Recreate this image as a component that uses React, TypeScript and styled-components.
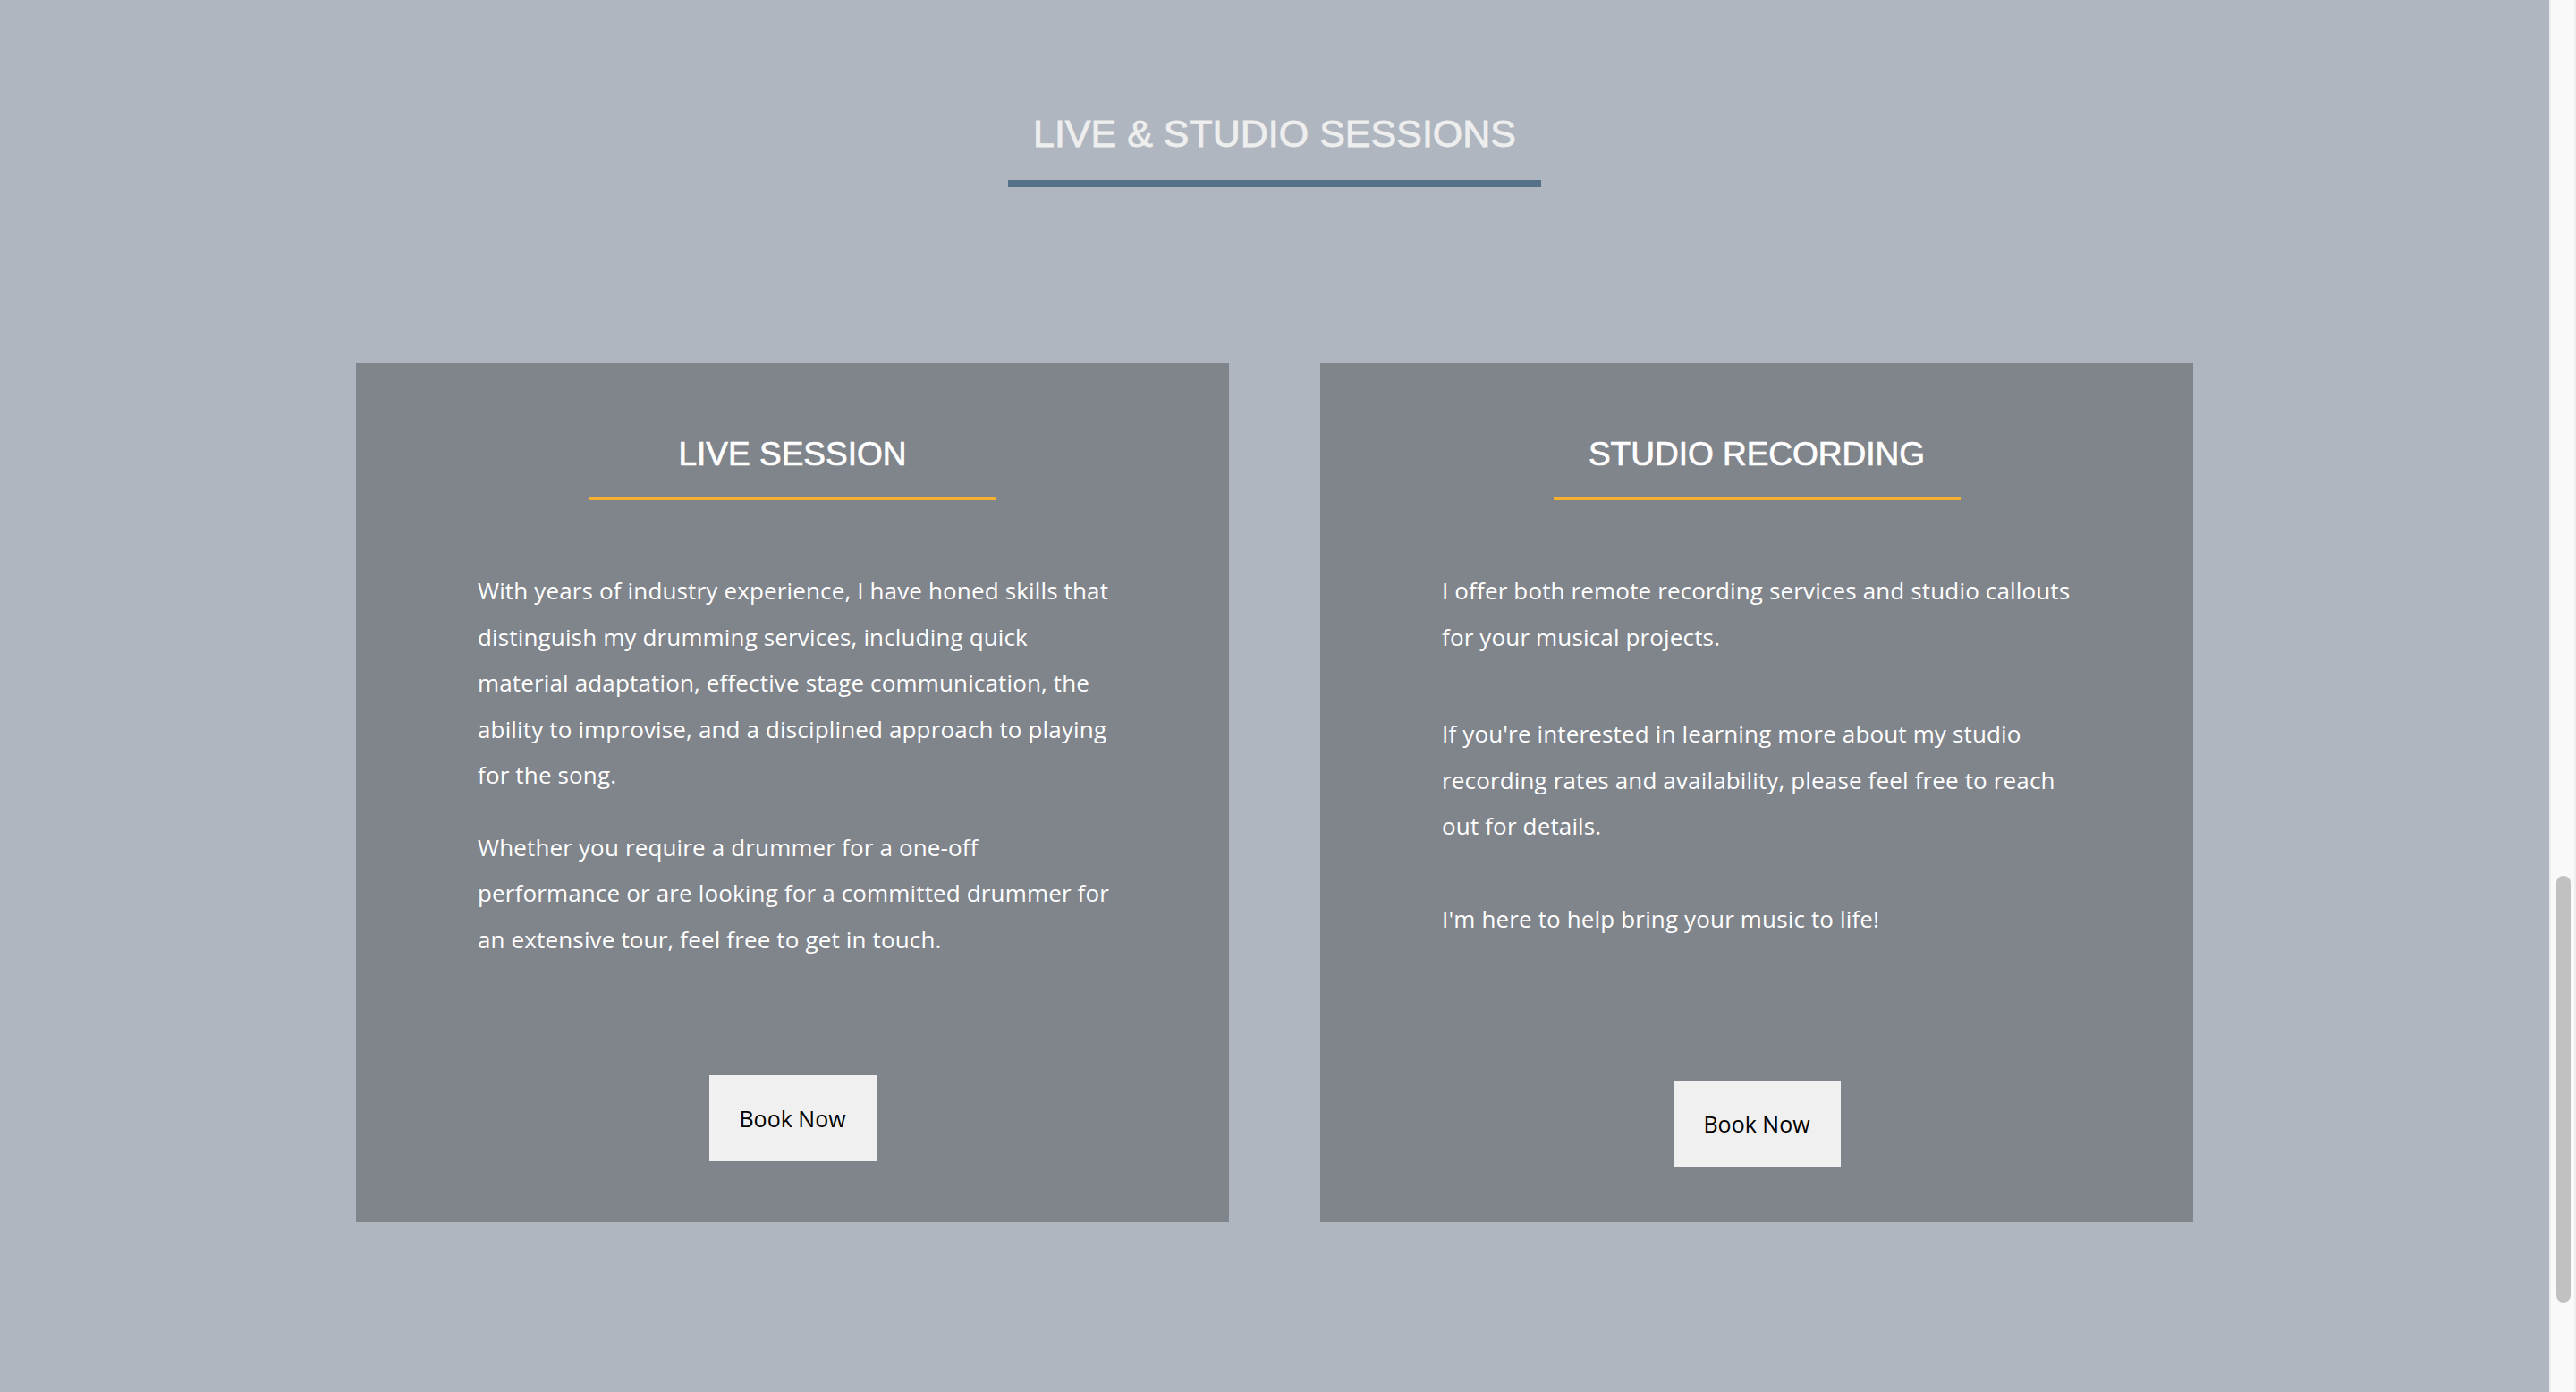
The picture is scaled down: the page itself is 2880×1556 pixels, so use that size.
import React from 'react';
import styled, { createGlobalStyle } from 'styled-components';

interface Session {
  title: string;
  paragraphs: string[];
  gaps: number[];
  buttonBottom: number;
}

const sessions: Session[] = [
  {
    title: 'LIVE SESSION',
    paragraphs: [
      'With years of industry experience, I have honed skills that distinguish my drumming services, including quick material adaptation, effective stage communication, the ability to improvise, and a disciplined approach to playing for the song.',
      'Whether you require a drummer for a one-off performance or are looking for a committed drummer for an extensive tour, feel free to get in touch.'
    ],
    gaps: [0, 29],
    buttonBottom: 68
  },
  {
    title: 'STUDIO RECORDING',
    paragraphs: [
      'I offer both remote recording services and studio callouts for your musical projects.',
      "If you're interested in learning more about my studio recording rates and availability, please feel free to reach out for details.",
      "I'm here to help bring your music to life!"
    ],
    gaps: [0, 57, 52],
    buttonBottom: 62
  }
];

const App = () => {
  return (
    <Page>
      <GlobalStyle />
      <Section>
        <Heading>
          <HeadingText>LIVE &amp; STUDIO SESSIONS</HeadingText>
          <HeadingRule />
        </Heading>
        <Cards>
          {sessions.map((s) => (
            <Card key={s.title}>
              <CardTitle>{s.title}</CardTitle>
              <CardRule />
              <Body>
                {s.paragraphs.map((p, i) => (
                  <Paragraph key={i} $gap={s.gaps[i]}>
                    {p}
                  </Paragraph>
                ))}
              </Body>
              <BookButton $bottom={s.buttonBottom}>Book Now</BookButton>
            </Card>
          ))}
        </Cards>
      </Section>
      <Scrollbar>
        <Thumb />
      </Scrollbar>
    </Page>
  );
};

export default App;

const GlobalStyle = createGlobalStyle`
  html, body {
    margin: 0;
    padding: 0;
    background: #b0b6bf;
    overflow: hidden;
  }
`;

const Page = styled.div`
  min-height: 1556px;
  padding-right: 30px;
  background: #b0b6bf;
  font-family: 'Open Sans', 'Noto Sans', sans-serif;
`;

const Section = styled.section`
  display: flex;
  flex-direction: column;
  align-items: center;
  padding-top: 128px;
`;

const Heading = styled.div`
  display: flex;
  flex-direction: column;
  align-items: center;
`;

const HeadingText = styled.h2`
  margin: 0;
  font-family: 'Liberation Sans', Arial, sans-serif;
  font-weight: 400;
  font-size: 43px;
  line-height: 1;
  color: #eeeeee;
  -webkit-text-stroke: 0.8px #eeeeee;
`;

const HeadingRule = styled.div`
  width: 596px;
  height: 8px;
  margin-top: 30px;
  background: #557089;
`;

const Cards = styled.div`
  display: flex;
  gap: 102px;
  margin-top: 197px;
`;

const Card = styled.div`
  display: flex;
  flex-direction: column;
  align-items: center;
  width: 976px;
  height: 960px;
  box-sizing: border-box;
  padding: 83px 128px 0 136px;
  background: #80848b;
`;

const CardTitle = styled.h3`
  margin: 0 0 0 -8px;
  font-family: 'Liberation Sans', Arial, sans-serif;
  font-weight: 400;
  font-size: 37px;
  line-height: 1;
  color: #ffffff;
  -webkit-text-stroke: 0.7px #ffffff;
`;

const CardRule = styled.div`
  width: 455px;
  height: 3px;
  margin: 30px 0 0 -8px;
  background: #f5b02e;
`;

const Body = styled.div`
  align-self: stretch;
  margin-top: 76px;
`;

const Paragraph = styled.p<{ $gap: number }>`
  margin: ${(p) => p.$gap}px 0 0;
  font-size: 26px;
  letter-spacing: 0.15px;
  line-height: 51.5px;
  color: #ffffff;
`;

const BookButton = styled.button<{ $bottom: number }>`
  margin: auto 0 ${(p) => p.$bottom}px -8px;
  width: 187px;
  height: 96px;
  border: none;
  background: #f0f0f0;
  color: #000000;
  font-family: 'Open Sans', 'Noto Sans', sans-serif;
  font-size: 25px;
  cursor: pointer;
`;

const Scrollbar = styled.div`
  position: fixed;
  top: 0;
  right: 0;
  width: 30px;
  height: 100vh;
  box-sizing: border-box;
  border-left: 2px solid #efeded;
  border-right: 2px solid #eeeeee;
  background: #f9f9f9;
`;

const Thumb = styled.div`
  position: absolute;
  top: 979px;
  left: 6px;
  width: 16px;
  height: 477px;
  border-radius: 8px;
  background: #c1c1c1;
`;
